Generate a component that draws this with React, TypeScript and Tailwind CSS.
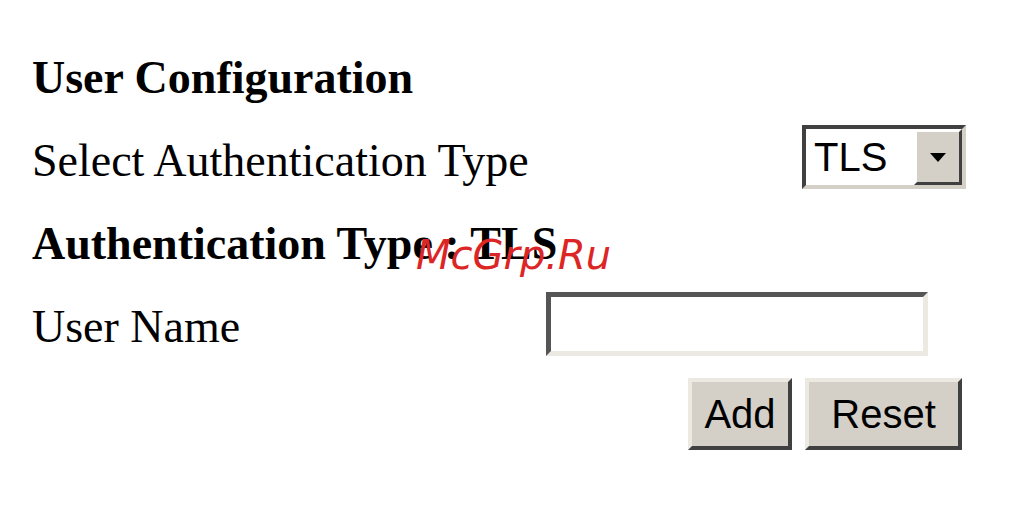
export default function App() {
  return (
    <div className="relative h-[508px] w-[1018px] overflow-hidden bg-white font-['Liberation_Serif',serif] text-black">
      <div className="flex w-[966px] flex-col pl-[32px] pt-[50px]">
        <h1 className="text-[46px] font-bold leading-[56px]">User Configuration</h1>

        <div className="mt-[14px] flex items-center justify-between">
          <span className="pt-[9px] text-[46px] leading-[64px]">Select Authentication Type</span>
          <div className="flex h-[64px] w-[164px] border-[4px] border-b-[#d4d0c8] border-l-[#404040] border-r-[#d4d0c8] border-t-[#404040] bg-white">
            <span className="flex-1 pl-[8px] font-['Liberation_Sans',sans-serif] text-[40px] leading-[56px]">TLS</span>
            <span className="flex w-[48px] items-center justify-center border-[3px] border-b-[#404040] border-l-[#fff] border-r-[#404040] border-t-[#fff] bg-[#d4d0c8]">
              <svg width="20" height="12" viewBox="0 0 20 12">
                <path d="M2 2h16L10 11z" fill="#000" />
              </svg>
            </span>
          </div>
        </div>

        <h2 className="mt-[23px] text-[46px] font-bold leading-[56px]">Authentication Type : TLS</h2>

        <div className="mt-[17px] flex items-center">
          <span className="w-[514px] pt-[6px] text-[46px] leading-[64px]">User Name</span>
          <input
            type="text"
            className="h-[64px] w-[382px] border-[5px] border-b-[#ece9e2] border-l-[#555] border-r-[#ece9e2] border-t-[#555] bg-white outline-none"
          />
        </div>

        <div className="mt-[19px] flex justify-end gap-[13px] pr-[4px]">
          <button className="h-[72px] w-[104px] border-[4px] border-b-[#404040] border-l-[#ece9e2] border-r-[#404040] border-t-[#ece9e2] bg-[#d4d0c8] font-['Liberation_Sans',sans-serif] text-[40px]">
            Add
          </button>
          <button className="h-[72px] w-[157px] border-[4px] border-b-[#404040] border-l-[#ece9e2] border-r-[#404040] border-t-[#ece9e2] bg-[#d4d0c8] font-['Liberation_Sans',sans-serif] text-[40px]">
            Reset
          </button>
        </div>
      </div>

      <span className="absolute left-[416px] top-[231px] font-['DejaVu_Sans',sans-serif] text-[40px] italic leading-[48px] text-[#dc2626]">
        McGrp.Ru
      </span>
    </div>
  );
}
